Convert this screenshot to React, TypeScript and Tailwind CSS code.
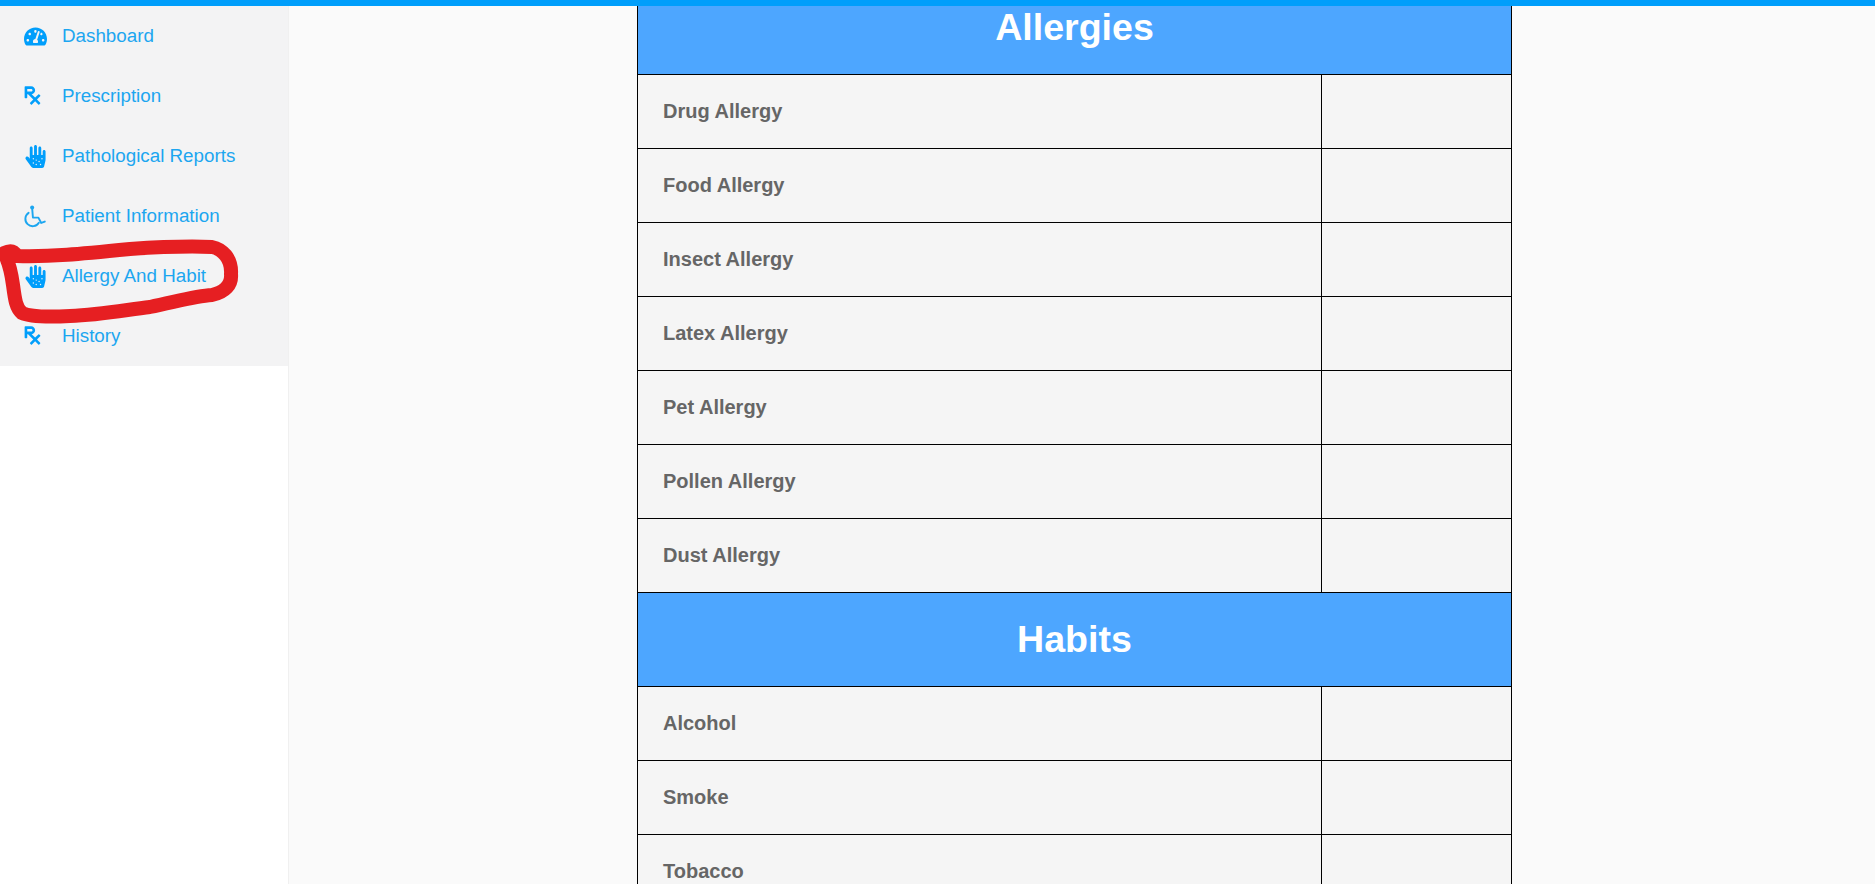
import { FaTachometerAlt, FaPrescription, FaAllergies } from "react-icons/fa";

function WheelchairIcon({ className }: { className?: string }) {
  return (
    <svg className={className} viewBox="0 0 24 24" width="23" height="23" fill="none" stroke="#1ca6f0" strokeWidth="2" strokeLinecap="round" strokeLinejoin="round">
      <circle cx="8.5" cy="2.6" r="2.1" fill="#1ca6f0" stroke="none" />
      <path d="M8.5 3 L9.3 13 L15 13.2 L18 18.7 L21.7 17.3" />
      <path d="M4.8 8.2 A7.6 7.6 0 1 0 15.5 18.5" />
    </svg>
  );
}

const nav = [
  { label: "Dashboard", Icon: FaTachometerAlt, iconClass: "text-[23px] text-[#009efb]" },
  { label: "Prescription", Icon: FaPrescription, iconClass: "-ml-[2px] -translate-y-px text-[21px] text-[#009efb]" },
  { label: "Pathological Reports", Icon: FaAllergies, iconClass: "text-[23px] text-[#009efb]" },
  { label: "Patient Information", Icon: WheelchairIcon, iconClass: "" },
  { label: "Allergy And Habit", Icon: FaAllergies, iconClass: "text-[23px] text-[#009efb]" },
  { label: "History", Icon: FaPrescription, iconClass: "-ml-[2px] -translate-y-px text-[21px] text-[#009efb]" },
];

function Row({ label }: { label: string }) {
  return (
    <tr>
      <td className="h-[74px] border border-black pb-[2px] pl-[25px] text-[20px] font-bold text-[#666666]">{label}</td>
      <td className="h-[74px] border border-black"></td>
    </tr>
  );
}

function Header({ label }: { label: string }) {
  return (
    <tr>
      <th colSpan={2} className="h-[94px] border border-black bg-[#4da6ff] text-center text-[37.6px] font-bold text-white">{label}</th>
    </tr>
  );
}

export default function App() {
  return (
    <div className="relative flex h-[884px] flex-col overflow-hidden bg-[#fafafa] font-['Liberation_Sans',Arial,sans-serif]">
      <div className="h-[6px] shrink-0 bg-[#009efb]"></div>
      <div className="flex min-h-0 flex-1">
        <aside className="w-[289px] shrink-0 border-r border-[#f0f0f0] bg-white">
          <nav className="bg-[#f3f3f4]">
            {nav.map(({ label, Icon, iconClass }) => (
              <div key={label} className="flex h-[60px] items-center pl-[24px] text-[18.8px] text-[#1ca6f0]">
                <span className="flex w-[38px] shrink-0 items-center"><Icon className={iconClass} /></span>
                <span>{label}</span>
              </div>
            ))}
          </nav>
        </aside>
        <main className="min-w-0 flex-1 overflow-hidden pl-[348px]">
          <table className="-mt-[26px] w-[875px] table-fixed border-collapse bg-[#f5f5f5]">
            <colgroup>
              <col className="w-[684px]" />
              <col />
            </colgroup>
            <tbody>
              <Header label="Allergies" />
              {["Drug Allergy", "Food Allergy", "Insect Allergy", "Latex Allergy", "Pet Allergy", "Pollen Allergy", "Dust Allergy"].map((r) => <Row key={r} label={r} />)}
              <Header label="Habits" />
              {["Alcohol", "Smoke", "Tobacco"].map((r) => <Row key={r} label={r} />)}
            </tbody>
          </table>
        </main>
      </div>
      <svg className="pointer-events-none absolute left-0 top-0" width="260" height="340" fill="none">
        <path d="M4 253 C10 250 14 251 17 256 C50 257 80 254 130 249 C160 247 190 246 212 247 C222 249 232 258 231 274 C232 285 225 292 212 295 C195 296 175 302 150 307 C125 310 100 315 70 316 C50 317 30 317 22 313 C16 308 15 300 13 285 C11 270 9 262 4 253 Z" stroke="#e61f22" strokeWidth="14" strokeLinejoin="round" />
      </svg>
    </div>
  );
}
